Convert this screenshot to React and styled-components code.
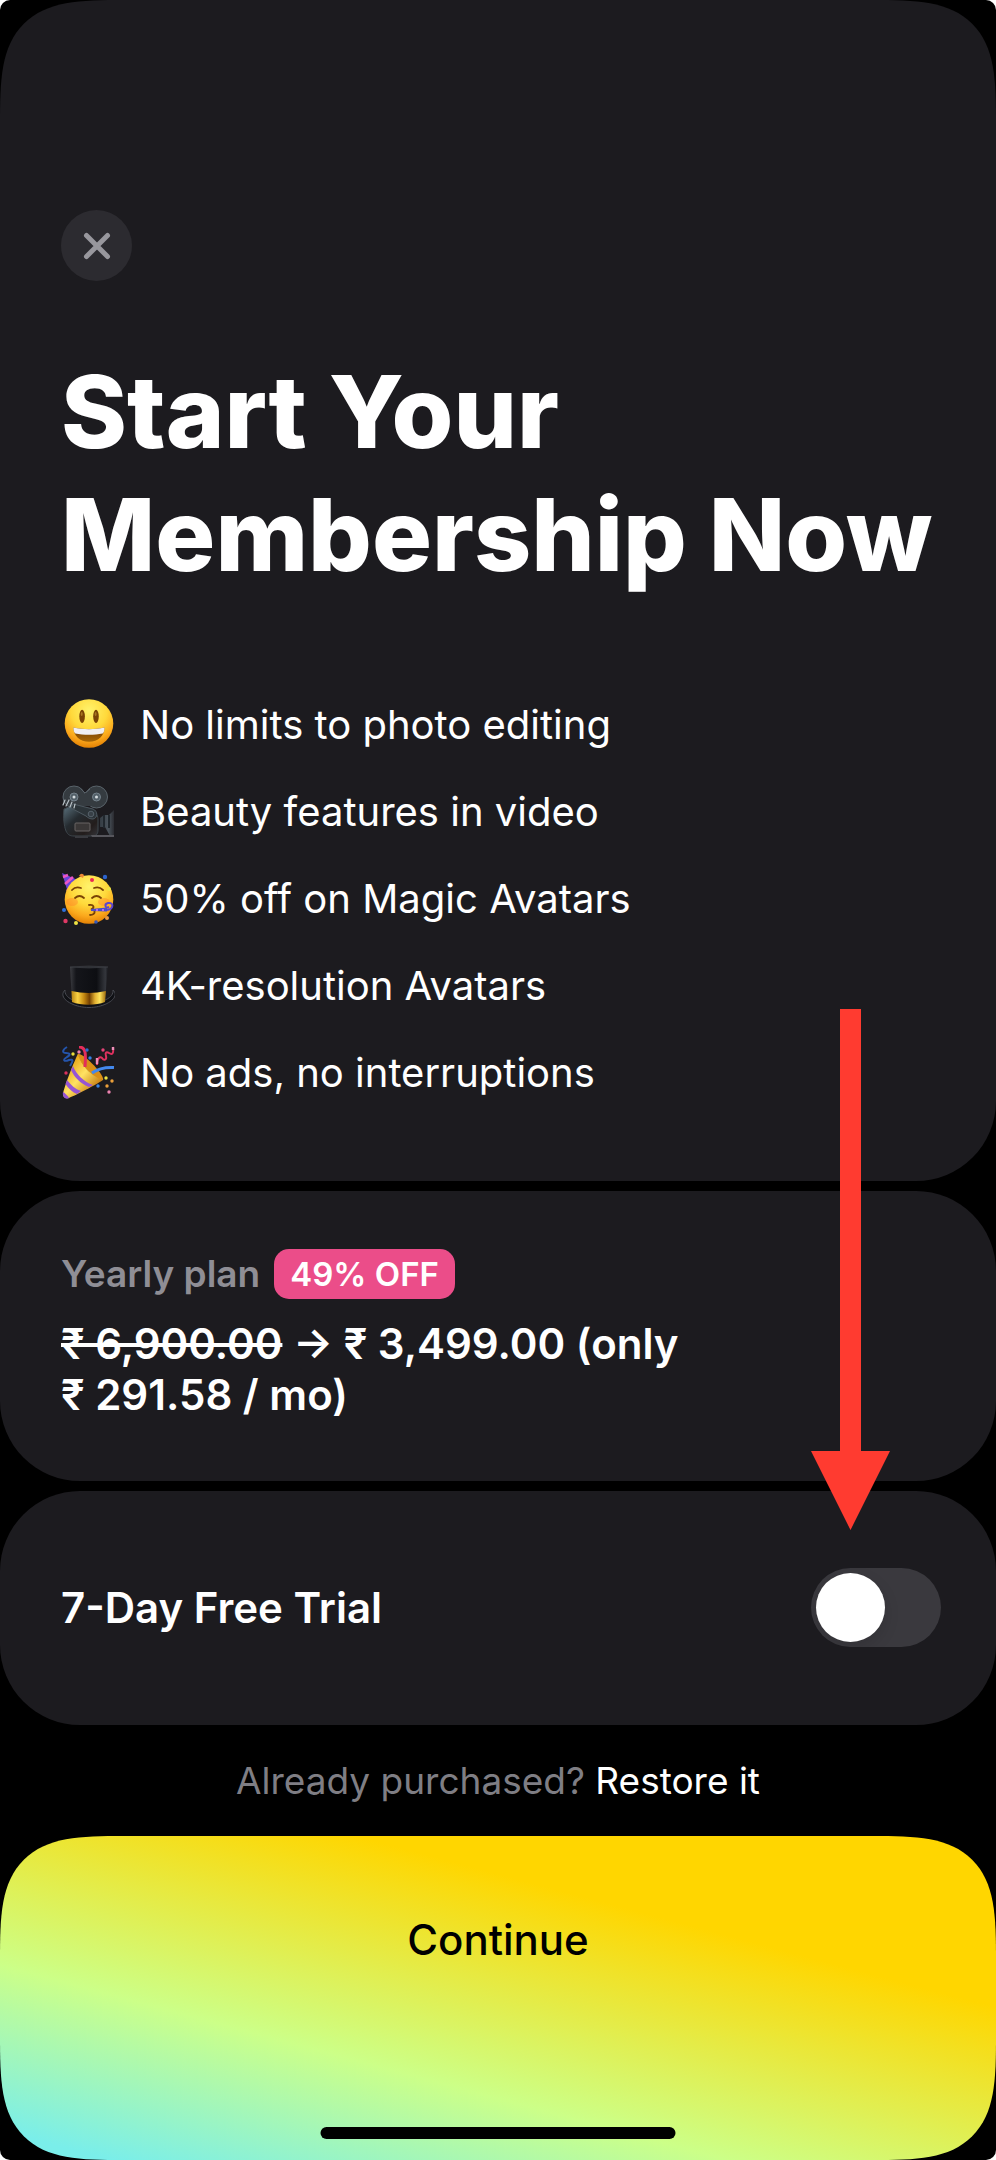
import React, { useState } from "react";
import styled, { createGlobalStyle, css } from "styled-components";

const GlobalStyle = createGlobalStyle`
  *, *::before, *::after { box-sizing: border-box; }
  body {
    margin: 0;
    background: #ffffff;
    color: #ffffff;
    font-family: Inter, "Liberation Sans", sans-serif;
  }
  h1, p, ul { margin: 0; padding: 0; }
`;

const Screen = styled.main`
  display: flex;
  flex-direction: column;
  min-height: 100vh;
  overflow: hidden;
  border-radius: 10px;
  background: #000000;
`;

const Cards = styled.div`
  display: flex;
  flex-direction: column;
  gap: 10px;
`;

const Card = styled.section`
  padding: ${(p) => p.$padding};
  border-radius: 80px;
  background: #1c1b1f;
`;

const continuousCorners = css`
  border-radius: 82px;
  @supports (corner-shape: superellipse(1.7)) {
    border-radius: 124px;
    corner-shape: superellipse(1.7);
  }
`;

const IntroCard = styled(Card)`
  @supports (corner-shape: superellipse(1.7)) {
    border-radius: 124px 124px 80px 80px;
    corner-shape: superellipse(1.7) superellipse(1.7) round round;
  }
`;

const CloseButton = styled.button`
  display: flex;
  align-items: center;
  justify-content: center;
  width: 71px;
  height: 71px;
  padding: 0;
  border: 0;
  border-radius: 50%;
  background: #2c2b30;
  color: #98979d;
  cursor: pointer;
`;

const Title = styled.h1`
  margin-top: 69px;
  font-size: 100px;
  font-weight: 800;
  line-height: 123px;
`;

const Features = styled.ul`
  display: flex;
  flex-direction: column;
  gap: 33px;
  margin-top: 102px;
  list-style: none;
`;

const Feature = styled.li`
  display: flex;
  align-items: center;
  gap: 25px;
  font-size: 40px;
  line-height: 54px;
  svg { flex: none; }
`;

const PlanHeader = styled.div`
  display: flex;
  align-items: center;
  gap: 14px;
`;

const PlanName = styled.span`
  color: #8f8e95;
  font-size: 37px;
  font-weight: 600;
  line-height: 50px;
`;

const Badge = styled.span`
  padding: 0 16px;
  border-radius: 15px;
  background: #eb4d89;
  font-size: 33px;
  font-weight: 600;
  line-height: 50px;
`;

const Price = styled.p`
  max-width: 660px;
  margin-top: 19px;
  font-size: 42px;
  font-weight: 600;
  line-height: 51px;
  s { text-decoration-thickness: 4px; }
`;

const TrialRow = styled.div`
  display: flex;
  align-items: center;
  justify-content: space-between;
`;

const TrialLabel = styled.label`
  font-size: 42px;
  font-weight: 600;
  line-height: 51px;
`;

const SwitchHolder = styled.div`
  position: relative;
  display: flex;
`;

const Switch = styled.input`
  appearance: none;
  width: 130px;
  height: 79px;
  margin: 0;
  padding: 5px;
  overflow: hidden;
  border-radius: 40px;
  background: #3a393e;
  cursor: pointer;
  &::before {
    content: "";
    display: block;
    width: 69px;
    height: 69px;
    border-radius: 50%;
    background: #ffffff;
    box-shadow: 0 6px 16px rgba(0, 0, 0, 0.12);
  }
  &:checked { background: #34c759; }
  &:checked::before { margin-left: auto; }
`;

const Pointer = styled.svg`
  position: absolute;
  bottom: calc(100% + 38px);
  left: 0;
  pointer-events: none;
`;

const Restore = styled.p`
  padding: 30px;
  color: #7f7e84;
  font-size: 37px;
  line-height: 51px;
  text-align: center;
  a { color: #ffffff; text-decoration: none; }
`;

const ContinueButton = styled.button`
  position: relative;
  display: flex;
  flex: 1;
  align-items: flex-start;
  justify-content: center;
  min-height: 324px;
  padding: 78px 62px;
  border: 0;
  background: linear-gradient(15deg, #7aeeea 5%, #ccff88 33%, #ffd600 71%);
  color: #000000;
  font: 500 42px/51px Inter, "Liberation Sans", sans-serif;
  cursor: pointer;
  ${continuousCorners}
`;

const HomeIndicator = styled.span`
  position: absolute;
  bottom: 21px;
  left: 50%;
  width: 355px;
  height: 12px;
  border-radius: 6px;
  background: #000000;
  transform: translateX(-50%);
`;

const Icon = ({ children }) => (
  <svg width="54" height="54" viewBox="0 0 54 54" fill="none" aria-hidden="true">
    {children}
  </svg>
);

const SmileIcon = () => (
  <Icon>
    <defs>
      <radialGradient id="smile" cx="50%" cy="24%" r="74%">
        <stop offset="0" stopColor="#fff36c" />
        <stop offset=".5" stopColor="#ffd93b" />
        <stop offset=".82" stopColor="#fba81c" />
        <stop offset="1" stopColor="#e78708" />
      </radialGradient>
      <linearGradient id="mouth" x1="0" y1="0" x2="0" y2="1">
        <stop offset="0" stopColor="#6f3b06" />
        <stop offset="1" stopColor="#a96806" />
      </linearGradient>
    </defs>
    <circle cx="28" cy="25.500" r="24.300" fill="url(#smile)" />
    <ellipse cx="21.100" cy="18.300" rx="2.800" ry="6.600" fill="#7a4305" />
    <ellipse cx="35" cy="18.300" rx="2.800" ry="6.600" fill="#7a4305" />
    <ellipse cx="20.700" cy="16" rx="1" ry="2" fill="#a87622" />
    <ellipse cx="34.600" cy="16" rx="1" ry="2" fill="#a87622" />
    <path d="M12.500 29.500c10 2.200 21 2.200 31 0 .3 8-6.500 14.300-15.500 14.300S12.200 37.500 12.500 29.500Z" fill="url(#mouth)" />
    <path d="M12.500 29.500c10 2.200 21 2.200 31 0 .2 2.500-.5 4.800-1.800 6-8.500 1.700-19 1.700-27.400 0-1.300-1.200-2-3.500-1.800-6Z" fill="#f0eff3" />
  </Icon>
);

const CameraIcon = () => (
  <Icon>
    <defs>
      <linearGradient id="camera" x1="0" y1="0" x2="1" y2="1">
        <stop offset="0" stopColor="#5d7480" />
        <stop offset=".4" stopColor="#252b30" />
        <stop offset=".75" stopColor="#231d1c" />
        <stop offset="1" stopColor="#34353a" />
      </linearGradient>
      <linearGradient id="lens">
        <stop offset="0" stopColor="#343c43" />
        <stop offset=".6" stopColor="#4a535b" />
        <stop offset="1" stopColor="#2a2b30" />
      </linearGradient>
    </defs>
    <circle cx="13" cy="12" r="11" fill="#353b40" stroke="#59636a" strokeWidth="1" />
    <circle cx="35.500" cy="12" r="11" fill="#353b40" stroke="#59636a" strokeWidth="1" />
    <path d="M18 3 24 9 30 3v18H15Z" fill="#353b40" />
    <path d="m20 4 4 4 5-4" stroke="#59636a" />
    <circle cx="13" cy="12" r="4" fill="#536069" stroke="#75828b" />
    <circle cx="35.500" cy="12" r="4" fill="#536069" stroke="#75828b" />
    <circle cx="13" cy="12" r="1.500" fill="#d5dce0" />
    <circle cx="35.500" cy="12" r="1.500" fill="#d5dce0" />
    <path d="m39 33 4-3h5l5-5v26h-4l-5-9h-5Z" fill="url(#lens)" />
    <path d="M43 30v13M48 30v13" stroke="#20272d" strokeWidth="2" />
    <path d="M3 24 12 20l19 6c5 2 6 5 6 9v10c0 4-2 6-5 6H13c-4 0-6-1-8-5-2-5-3-14-2-22Z" fill="url(#camera)" stroke="#3d464c" />
    <path d="m12 19 20 5c5 2 5 9 0 10-3 0-5-1-7-3L10 23Z" fill="#2c3439" stroke="#4d5860" />
    <circle cx="30" cy="29" r="2.800" fill="#384047" stroke="#56616a" />
    <path d="m2 20 2-5M5 21l3-6M9 22l2-5M13 23l1-4" stroke="#b8c1c6" strokeWidth="1.200" strokeLinecap="round" />
    <rect x="14" y="38" width="15" height="8" rx="1" fill="#3a3737" stroke="#686564" />
    <path d="M30 50h23v2H31Z" fill="#56565c" />
    <path d="M14 51h13v2H14Z" fill="#393a3f" />
  </Icon>
);

const PartyFaceIcon = () => (
  <Icon>
    <path d="M1 1 21 10 8 24Z" fill="#6b45d8" />
    <path d="m2 5 5-2M4 12l8-7M6 19 17 8" stroke="#ec55c4" strokeWidth="2.600" />
    <circle cx="28" cy="27.500" r="24.300" fill="url(#smile)" />
    <ellipse cx="11" cy="30" rx="6" ry="4" fill="#ff7d2a" opacity=".4" />
    <ellipse cx="43" cy="30" rx="6" ry="4" fill="#ff7d2a" opacity=".4" />
    <g stroke="#7a4305" strokeLinecap="round" strokeWidth="1.800">
      <path d="M11 18q3.500-4 9-2M33 16q5-2 9 2" />
      <path d="M14 26q4.500-4 9 0M31 26q4.500-4 9 0" />
      <path d="M28 33c5-1 6 3 2 4.500 5 0 5 5-1 5.500" />
    </g>
    <path d="m30 37 16-1.500v4L30 39Z" fill="#4a4cc8" />
    <path d="M46 38c7-1 7-8 1-7-4 1-3 6 1 4" stroke="#5944d0" strokeWidth="2" />
    <path d="M35 38h2M41 38h2" stroke="#b36af0" strokeWidth="2" />
    <circle cx="31" cy="8" r="2" fill="#ec2754" />
    <path d="M18 4q2-4 5-1l-1 3Z" fill="#ed8a35" />
    <circle cx="44" cy="5" r="2.200" fill="#2c63cc" />
    <circle cx="48" cy="17" r="2" fill="#eee344" />
    <circle cx="3" cy="38" r="2" fill="#2c70dd" />
    <circle cx="4.500" cy="49" r="2.200" fill="#df3965" />
    <circle cx="15" cy="51" r="2" fill="#eee344" />
    <circle cx="46" cy="46" r="2" fill="#ed9a42" />
    <circle cx="35" cy="50" r="1.800" fill="#3558bb" />
  </Icon>
);

const HatIcon = () => (
  <Icon>
    <defs>
      <linearGradient id="hat">
        <stop offset="0" stopColor="#3b3c41" />
        <stop offset=".16" stopColor="#14151a" />
        <stop offset=".7" stopColor="#0d0e12" />
        <stop offset=".93" stopColor="#34363c" />
        <stop offset="1" stopColor="#1a1b20" />
      </linearGradient>
      <linearGradient id="band">
        <stop offset="0" stopColor="#b98615" />
        <stop offset=".18" stopColor="#fbd243" />
        <stop offset=".36" stopColor="#c58a12" />
        <stop offset=".52" stopColor="#744000" />
        <stop offset=".68" stopColor="#e2b031" />
        <stop offset=".82" stopColor="#ffe45c" />
        <stop offset="1" stopColor="#9c690b" />
      </linearGradient>
    </defs>
    <path d="M4 31c-8 8 8 17.500 24 17.500S60 39 52 31c1 8-11 13-24 13S3 39 4 31Z" fill="#101115" stroke="#484a51" strokeWidth="1" />
    <path d="M9 8c10-1.500 28-1.500 38 0l-3 34c-9 4-24 4-33 0Z" fill="url(#hat)" />
    <path d="M9 8q19-2 38 0-19 2-38 0Z" fill="#292b30" stroke="#45474c" strokeWidth=".5" />
    <path d="M10.500 32q17 4 34.500 0l-1 11c-9 3.500-24 3.500-33 0Z" fill="url(#band)" />
  </Icon>
);

const PopperIcon = () => (
  <Icon>
    <defs>
      <linearGradient id="cone" x1="0" y1="0" x2="1" y2="1">
        <stop offset=".2" stopColor="#e9a719" />
        <stop offset=".48" stopColor="#ffe263" />
        <stop offset=".8" stopColor="#c77d10" />
      </linearGradient>
    </defs>
    <path d="M17 8c-3 1 14 27 25 26 3-4-20-28-25-26Z" fill="#d98e16" />
    <path d="M17 8C14 13 3 41 2 48c0 4 3 5 6 4 7-3 27-13 34-18C31 31 19 18 17 8Z" fill="url(#cone)" />
    <path d="M12 20c3 8 11 16 20 19l-4 2C20 38 13 31 10 24ZM6 34c4 5 8 9 14 11l-4 3C11 46 7 42 4.500 38ZM2 46c2 1 5 4 6 6-3 2-7-1-6-6Z" fill="#9655d4" />
    <path d="M18 1c7 0 7 7 6 20" stroke="#e32d5b" strokeWidth="3" />
    <path d="M31 27c7-5 13-6 22-5.500" stroke="#4389ed" strokeWidth="3" />
    <path d="M6 1C1 4 1 7 5 7c4 0 5 2 1 4-5 3-3 5 2 3 5-1 4 1 1 6" stroke="#2454aa" strokeWidth="2" />
    <path d="M52 1c1 7-1 8-4 6-3-2-4 0-3 3 1 4-2 5-4 2-2-2-5 0-5 7" stroke="#df315f" strokeWidth="2" />
    <path d="M36 12v6" stroke="#ee8fba" strokeWidth="2.400" />
    <path d="M52 1v3" stroke="#ee8fba" strokeWidth="2.400" />
    {[
      [12, 8, "#e9dc39"], [18, 6, "#ec83b0"], [26, 4, "#2b6bd0"], [29, 12, "#3381e4"],
      [42, 4, "#e34477"], [5, 27, "#d9315c"], [45, 32, "#eee344"], [51, 35, "#eba03b"],
      [46, 40, "#eba03b"], [37, 40, "#3684e6"], [48, 46, "#ec83b0"],
    ].map(([x, y, color]) => (
      <circle key={`${x}-${y}`} cx={x} cy={y} r="1.700" fill={color} />
    ))}
  </Icon>
);

const features = [
  [SmileIcon, "No limits to photo editing"],
  [CameraIcon, "Beauty features in video"],
  [PartyFaceIcon, "50% off on Magic Avatars"],
  [HatIcon, "4K-resolution Avatars"],
  [PopperIcon, "No ads, no interruptions"],
];

export default function App() {
  const [trial, setTrial] = useState(false);
  return (
    <>
      <GlobalStyle />
      <Screen>
        <Cards>
          <IntroCard $padding="210px 50px 81px 61px">
            <CloseButton type="button" aria-label="Close">
              <svg width="28" height="28" viewBox="0 0 28 28" aria-hidden="true">
                <path d="M3.500 3.500l21 21M24.500 3.500l-21 21" stroke="currentColor" strokeWidth="5" strokeLinecap="round" />
              </svg>
            </CloseButton>
            <Title>Start Your Membership Now</Title>
            <Features>
              {features.map(([FeatureIcon, text]) => (
                <Feature key={text}>
                  <FeatureIcon />
                  <span>{text}</span>
                </Feature>
              ))}
            </Features>
          </IntroCard>

          <Card $padding="58px 61px 61px">
            <PlanHeader>
              <PlanName>Yearly plan</PlanName>
              <Badge>49% OFF</Badge>
            </PlanHeader>
            <Price>
              <s>{"₹\u00a06,900.00"}</s>
              {" → ₹\u00a03,499.00 (only ₹\u00a0291.58 / mo)"}
            </Price>
          </Card>

          <Card $padding="77px 55px 78px 61px">
            <TrialRow>
              <TrialLabel htmlFor="trial">7-Day Free Trial</TrialLabel>
              <SwitchHolder>
                <Switch
                  id="trial"
                  type="checkbox"
                  role="switch"
                  checked={trial}
                  onChange={(e) => setTrial(e.target.checked)}
                />
                <Pointer width="79" height="521" viewBox="0 0 79 521" aria-hidden="true">
                  <path d="M29 0h21v442h29l-39.500 79L0 442h29Z" fill="#ff3b30" />
                </Pointer>
              </SwitchHolder>
            </TrialRow>
          </Card>
        </Cards>

        <Restore>
          Already purchased? <a href="#restore">Restore it</a>
        </Restore>

        <ContinueButton type="button">
          Continue
          <HomeIndicator />
        </ContinueButton>
      </Screen>
    </>
  );
}
